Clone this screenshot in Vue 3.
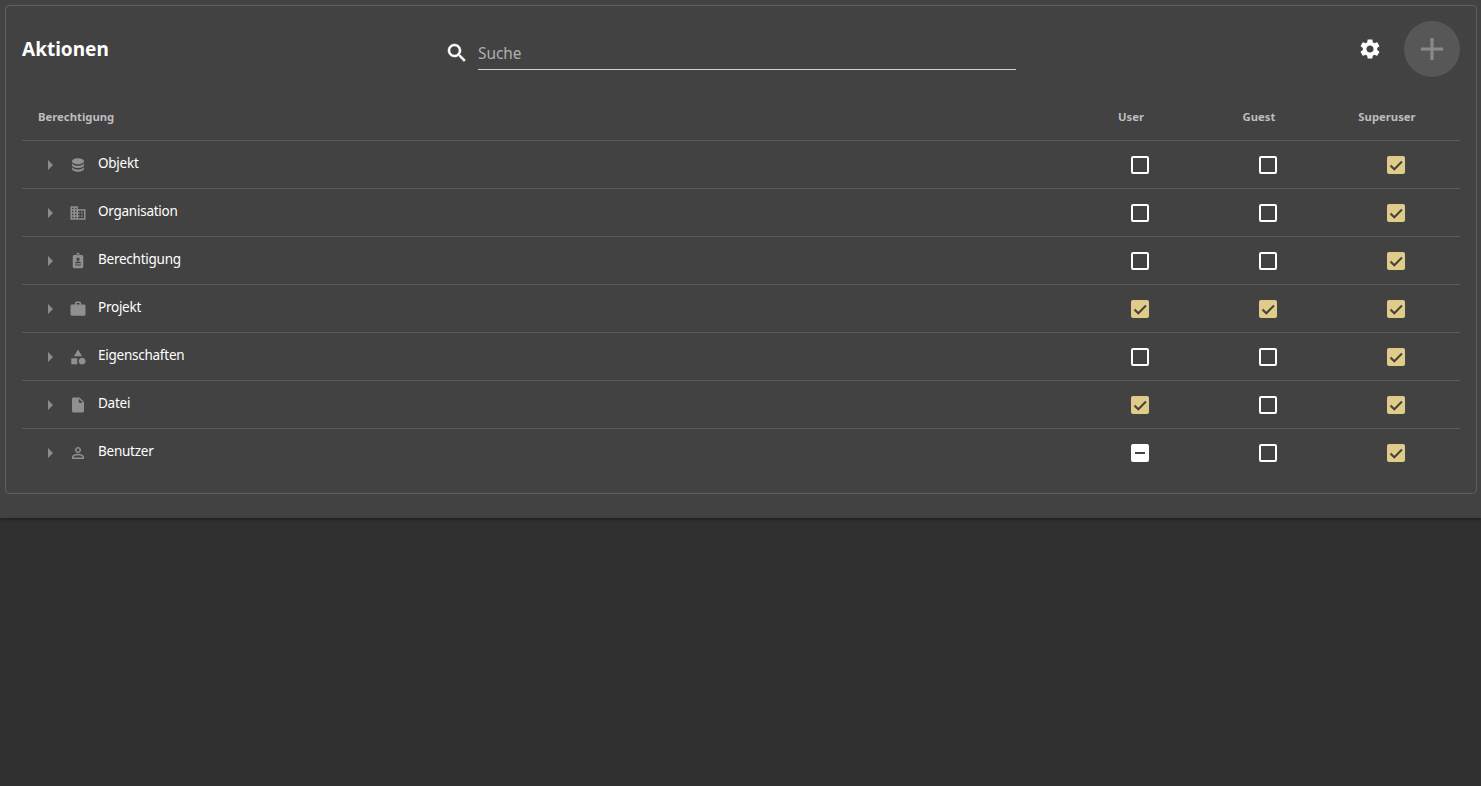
<script setup>
const icons = {
  db: 'M12 3C7.58 3 4 4.79 4 7s3.58 4 8 4 8-1.79 8-4-3.58-4-8-4zM4 9v3c0 2.21 3.58 4 8 4s8-1.79 8-4V9c0 2.21-3.58 4-8 4s-8-1.79-8-4zm0 5v3c0 2.21 3.58 4 8 4s8-1.79 8-4v-3c0 2.21-3.58 4-8 4s-8-1.79-8-4z',
  org: 'M12 7V3H2v18h20V7H12zM6 19H4v-2h2v2zm0-4H4v-2h2v2zm0-4H4V9h2v2zm0-4H4V5h2v2zm4 12H8v-2h2v2zm0-4H8v-2h2v2zm0-4H8V9h2v2zm0-4H8V5h2v2zm10 12h-8v-2h2v-2h-2v-2h2v-2h-2V9h8v10zm-2-8h-2v2h2v-2zm0 4h-2v2h2v-2z',
  badge: 'M7 4h3V3c0-1.1.9-2 2-2s2 .9 2 2v1h3c1.1 0 2 .9 2 2v13.5c0 1.1-.9 2-2 2H7c-1.1 0-2-.9-2-2V6c0-1.1.9-2 2-2zm5-1.5a1 1 0 1 0 0 2 1 1 0 0 0 0-2zM12 7.5a2.2 2.2 0 1 0 0 4.4 2.2 2.2 0 0 0 0-4.4zm-4 6.4v1.2h8v-1.2c-1-.8-2.6-1.2-4-1.2s-3 .4-4 1.2zM8 16.6V18h8v-1.4H8z',
  work: 'M20 6h-4V4c0-1.11-.89-2-2-2h-4c-1.11 0-2 .89-2 2v2H4c-1.11 0-1.99.89-1.99 2L2 19c0 1.11.89 2 2 2h16c1.11 0 2-.89 2-2V8c0-1.11-.89-2-2-2zm-6 0h-4V4h4v2z',
  category: 'M12 2l-5.5 9h11L12 2zm5.5 11c-2.49 0-4.5 2.01-4.5 4.5s2.01 4.5 4.5 4.5 4.5-2.01 4.5-4.5-2.01-4.5-4.5-4.5zM3 21.5h8v-8H3v8z',
  file: 'M6 2c-1.1 0-1.99.9-1.99 2L4 20c0 1.1.89 2 1.99 2H18c1.1 0 2-.9 2-2V8l-6-6H6zm7 7V3.5L18.5 9H13z',
  person: 'M12 5.9c1.16 0 2.1.94 2.1 2.1s-.94 2.1-2.1 2.1S9.9 9.16 9.9 8s.94-2.1 2.1-2.1m0 9c2.97 0 6.1 1.46 6.1 2.1v1.1H5.9V17c0-.64 3.13-2.1 6.1-2.1M12 4C9.79 4 8 5.79 8 8s1.79 4 4 4 4-1.79 4-4-1.79-4-4-4zm0 9c-2.67 0-8 1.34-8 4v3h16v-3c0-2.66-5.33-4-8-4z'
}
const rows = [
  { name: 'Objekt', icon: 'db', states: ['off', 'off', 'on'] },
  { name: 'Organisation', icon: 'org', states: ['off', 'off', 'on'] },
  { name: 'Berechtigung', icon: 'badge', states: ['off', 'off', 'on'] },
  { name: 'Projekt', icon: 'work', states: ['on', 'on', 'on'] },
  { name: 'Eigenschaften', icon: 'category', states: ['off', 'off', 'on'] },
  { name: 'Datei', icon: 'file', states: ['on', 'off', 'on'] },
  { name: 'Benutzer', icon: 'person', states: ['mixed', 'off', 'on'] }
]
const columns = ['User', 'Guest', 'Superuser']
</script>

<template>
  <div class="page">
    <section class="panel">
      <div class="card">
        <header class="toolbar">
          <h1 class="title">Aktionen</h1>
          <div class="search">
            <svg class="search-icon" viewBox="0 0 24 24" width="24" height="24"><path d="M15.5 14h-.79l-.28-.27C15.41 12.59 16 11.11 16 9.5 16 5.91 13.09 3 9.5 3S3 5.91 3 9.5 5.91 16 9.5 16c1.61 0 3.09-.59 4.23-1.57l.27.28v.79l5 4.99L20.49 19l-4.99-5zm-6 0C7.01 14 5 11.99 5 9.5S7.01 5 9.5 5 14 7.01 14 9.5 11.99 14 9.5 14z"/></svg>
            <input class="search-input" type="text" placeholder="Suche" />
          </div>
          <svg class="gear" viewBox="0 0 24 24" width="24" height="24"><path d="M19.14,12.94c0.04-0.3,0.06-0.61,0.06-0.94c0-0.32-0.02-0.64-0.07-0.94l2.03-1.58c0.18-0.14,0.23-0.41,0.12-0.61 l-1.92-3.32c-0.12-0.22-0.37-0.29-0.59-0.22l-2.39,0.96c-0.5-0.38-1.03-0.7-1.62-0.94L14.4,2.81c-0.04-0.24-0.24-0.41-0.48-0.41 h-3.84c-0.24,0-0.43,0.17-0.47,0.41L9.25,5.35C8.66,5.59,8.12,5.92,7.63,6.29L5.24,5.33c-0.22-0.08-0.47,0-0.59,0.22L2.74,8.87 C2.62,9.08,2.66,9.34,2.86,9.48l2.03,1.58C4.84,11.36,4.8,11.69,4.8,12s0.02,0.64,0.07,0.94l-2.03,1.58 c-0.18,0.14-0.23,0.41-0.12,0.61l1.92,3.32c0.12,0.22,0.37,0.29,0.59,0.22l2.39-0.96c0.5,0.38,1.03,0.7,1.62,0.94l0.36,2.54 c0.05,0.24,0.24,0.41,0.48,0.41h3.84c0.24,0,0.44-0.17,0.47-0.41l0.36-2.54c0.59-0.24,1.13-0.56,1.62-0.94l2.39,0.96 c0.22,0.08,0.47,0,0.59-0.22l1.92-3.32c0.12-0.22,0.07-0.47-0.12-0.61L19.14,12.94z M12,15.6c-1.98,0-3.6-1.62-3.6-3.6 s1.62-3.6,3.6-3.6s3.6,1.62,3.6,3.6S13.98,15.6,12,15.6z"/></svg>
          <button class="add" type="button" aria-label="Hinzufügen">
            <svg viewBox="0 0 24 24" width="38" height="38"><path d="M19 13h-6v6h-2v-6H5v-2h6V5h2v6h6v2z"/></svg>
          </button>
        </header>

        <div class="row head">
          <div class="head-name">Berechtigung</div>
          <div v-for="c in columns" :key="c" class="head-col">{{ c }}</div>
        </div>

        <div v-for="r in rows" :key="r.name" class="row item">
          <div class="name">
            <svg class="arrow" viewBox="0 0 24 24" width="24" height="24"><path d="M10 17l5-5-5-5v10z"/></svg>
            <svg class="type" viewBox="0 0 24 24" width="18" height="18"><path :d="icons[r.icon]"/></svg>
            <span class="label">{{ r.name }}</span>
          </div>
          <div v-for="(s, i) in r.states" :key="i" class="cell">
            <span class="box" :class="s">
              <svg v-if="s === 'on'" viewBox="0 0 18 18" width="18" height="18"><path class="tick" d="M3.5 9.5l3.8 3.8L15 5.5"/></svg>
              <span v-else-if="s === 'mixed'" class="dash"></span>
            </span>
          </div>
        </div>
      </div>
    </section>
  </div>
</template>

<style scoped>
.page {
  min-height: 786px;
  background: #303030;
  font-family: "Noto Sans", "Open Sans", sans-serif;
  color: #fff;
}
.panel {
  height: 518px;
  box-sizing: border-box;
  padding: 5px 4px 0 5px;
  background: #424242;
  box-shadow: 0 1px 3px rgba(0, 0, 0, 0.5);
}
.card {
  box-sizing: border-box;
  height: 489px;
  padding: 15px 16px 16px;
  border: 1px solid #5f5f5f;
  border-radius: 4px;
}
.toolbar {
  display: flex;
  align-items: center;
  height: 56px;
}
.title {
  width: 423px;
  margin: 0;
  font-size: 19px;
  font-weight: 700;
  line-height: 24px;
  color: #fff;
  flex: none;
  padding-bottom: 1px;
}
.search {
  display: flex;
  align-items: center;
  gap: 9px;
  margin-top: 9px;
}
.search-icon {
  fill: #fff;
  stroke: #fff;
  stroke-width: 0.5;
  flex: none;
  margin-bottom: 1px;
}
.search-input {
  width: 538px;
  height: 32px;
  box-sizing: border-box;
  padding: 0;
  border: 0;
  border-bottom: 1px solid #d0d0d0;
  background: transparent;
  color: #fff;
  font: 15.4px "Noto Sans", "Open Sans", sans-serif;
  outline: none;
}
.search-input::placeholder {
  color: #b0b0b0;
  opacity: 1;
}
.gear {
  fill: #fff;
  margin-left: auto;
  margin-right: 22px;
  flex: none;
}
.add {
  width: 56px;
  height: 56px;
  padding: 0;
  border: 0;
  border-radius: 50%;
  background: #575757;
  display: flex;
  align-items: center;
  justify-content: center;
  flex: none;
}
.add svg {
  fill: #8a8a8a;
}
.row {
  display: grid;
  grid-template-columns: 1fr 128px 128px 128px;
  align-items: center;
}
.head {
  height: 64px;
  padding-top: 16px;
  box-sizing: border-box;
  border-bottom: 1px solid #5a5a5a;
  font-size: 11.3px;
  font-weight: 700;
  color: #bdbdbd;
}
.head-name {
  padding-left: 16px;
}
.head-col {
  text-align: center;
  padding-right: 18px;
}
.item {
  height: 48px;
  box-sizing: border-box;
  border-bottom: 1px solid #5a5a5a;
}
.item:last-child {
  border-bottom-color: transparent;
}
.name {
  display: flex;
  align-items: center;
  padding-left: 16px;
}
.arrow {
  fill: #8c8c8c;
  flex: none;
}
.type {
  fill: #909090;
  margin-left: 7px;
  flex: none;
}
.label {
  margin-left: 11px;
  font-size: 13.5px;
  letter-spacing: -0.25px;
  line-height: 20px;
  color: #fff;
  padding-bottom: 3px;
}
.cell {
  display: flex;
  justify-content: center;
}
.box {
  box-sizing: border-box;
  width: 18px;
  height: 18px;
  border-radius: 2px;
  border: 2px solid #fff;
  display: block;
  position: relative;
}
.box.on {
  border: 0;
  background: #e1cb88;
}
.box.on svg {
  display: block;
}
.tick {
  fill: none;
  stroke: #424242;
  stroke-width: 2;
}
.box.mixed {
  background: #fff;
  display: flex;
  align-items: center;
  justify-content: center;
}
.dash {
  width: 10px;
  height: 2px;
  background: #424242;
}
</style>

<style>
html, body {
  background: #303030;
}
</style>
